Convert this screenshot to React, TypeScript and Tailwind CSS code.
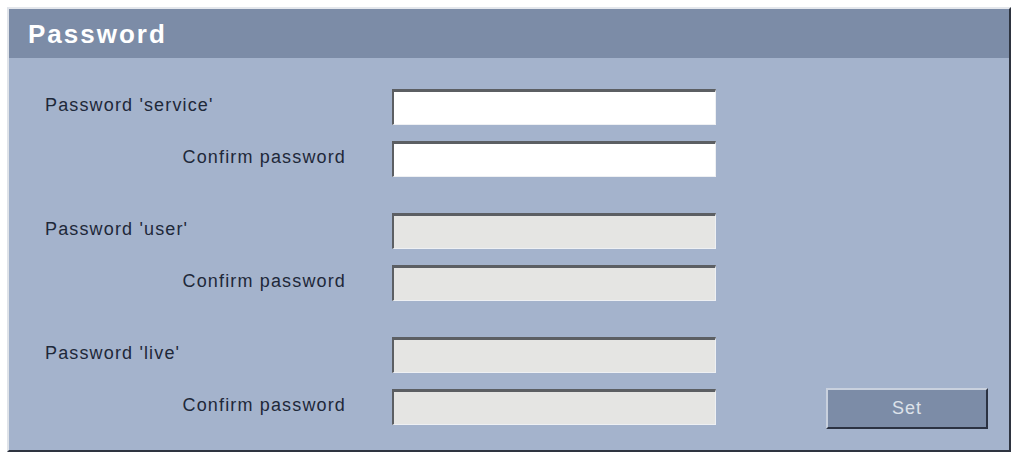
const rows = [
  { label: "Password 'service'", confirm: false, enabled: true },
  { label: 'Confirm password', confirm: true, enabled: true },
  { label: "Password 'user'", confirm: false, enabled: false },
  { label: 'Confirm password', confirm: true, enabled: false },
  { label: "Password 'live'", confirm: false, enabled: false },
  { label: 'Confirm password', confirm: true, enabled: false },
]

function Field({ enabled }: { enabled: boolean }) {
  return (
    <input
      type="password"
      disabled={!enabled}
      className={`h-9 w-[324px] border-t-[3px] border-l-2 border-b border-r border-t-[#5c5f63] border-l-[#5c5f63] border-b-[#eef0f3] border-r-[#eef0f3] outline-none ${
        enabled ? 'bg-white' : 'bg-[#e5e5e3]'
      }`}
    />
  )
}

export default function App() {
  return (
    <div className="h-[454px] w-[1015px] bg-white pl-[7px] pt-[7px]">
      <div
        className="flex h-[445px] w-[1004px] flex-col border-2 border-t-[#e4e7ec] border-l-[#dfe3e9] border-r-[#2e3440] border-b-[#2e3440] bg-[#a4b3cc]"
        style={{ fontFamily: '"Liberation Sans", Arial, sans-serif' }}
      >
        <div className="flex h-[49px] items-center bg-[#7c8ca7] pl-[19px] pt-[2px]">
          <h1 className="text-[26px] font-bold tracking-[2px] text-white">Password</h1>
        </div>

        <div className="flex flex-col pt-[31px]">
          {rows.map((row, i) => (
            <div
              key={i}
              className={`flex h-9 items-start ${i === 0 ? '' : i % 2 === 1 ? 'mt-4' : 'mt-9'}`}
            >
              <div
                className={`flex h-9 w-[383px] items-center pb-[3px] text-[18px] tracking-[1.15px] text-[#1e2839] ${
                  row.confirm ? 'justify-end pr-[46px]' : 'pl-[36px]'
                }`}
              >
                {row.label}
              </div>
              <Field enabled={row.enabled} />
              {i === rows.length - 1 && (
                <button
                  type="button"
                  className="ml-auto mr-[21px] -mt-px h-[41px] w-[162px] border-2 border-t-[#c9d1de] border-l-[#c9d1de] border-r-[#2b3242] border-b-[#2b3242] bg-[#7c8ca7] text-[18px] tracking-[1px] text-[#dde2ea]"
                >
                  Set
                </button>
              )}
            </div>
          ))}
        </div>
      </div>
    </div>
  )
}
